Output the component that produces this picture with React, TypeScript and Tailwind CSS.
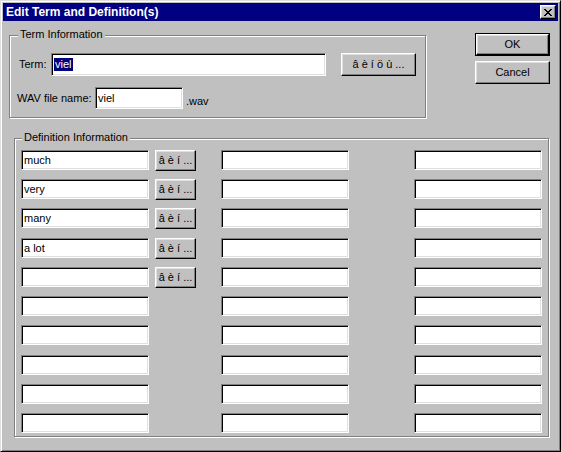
import React from 'react';

// Win95-style bevels
const sunken =
  'border border-t-[#808080] border-l-[#808080] border-b-white border-r-white shadow-[inset_1px_1px_0_#000,inset_-1px_-1px_0_#dfdfdf] bg-white';
const raised =
  'border border-t-white border-l-white border-b-black border-r-black shadow-[inset_-1px_-1px_0_#808080,inset_1px_1px_0_#dfdfdf] bg-[#c0c0c0]';
const etched = 'relative border border-[#808080] shadow-[1px_1px_0_#fff,inset_1px_1px_0_#fff]';

const definitions = ['much', 'very', 'many', 'a lot', '', '', '', '', '', ''];

const Field: React.FC<{ value?: string; className?: string }> = ({ value, className }) => (
  <div className={`${sunken} flex items-center pl-[2px] ${className ?? ''}`}>
    <span className="leading-none">{value}</span>
  </div>
);

const Button: React.FC<{ label: string; className?: string }> = ({ label, className }) => (
  <button
    type="button"
    className={`${raised} flex items-center justify-center whitespace-nowrap leading-none ${className ?? ''}`}
  >
    {label}
  </button>
);

const App: React.FC = () => {
  return (
    <div
      className="w-[561px] h-[452px] bg-[#c0c0c0] text-black text-[11px] border border-t-[#dfdfdf] border-l-[#dfdfdf] border-b-black border-r-black shadow-[inset_1px_1px_0_#fff,inset_-1px_-1px_0_#808080] p-[2px] flex flex-col overflow-hidden"
      style={{ fontFamily: '"Liberation Sans", Arial, sans-serif' }}
    >
      {/* Title bar */}
      <div className="h-[18px] bg-[#000080] flex items-center justify-between pl-[3px] pr-[2px] shrink-0">
        <span className="text-white font-bold text-[12px] leading-none">Edit Term and Definition(s)</span>
        <button
          type="button"
          className={`${raised} w-[16px] h-[14px] flex items-center justify-center`}
        >
          <svg width="8" height="7" viewBox="0 0 8 7" shapeRendering="crispEdges">
            <path d="M0 0h2v1h-2zM6 0h2v1h-2zM1 1h2v1h-2zM5 1h2v1h-2zM2 2h4v1h-4zM3 3h2v1h-2zM2 4h4v1h-4zM1 5h2v1h-2zM5 5h2v1h-2zM0 6h2v1h-2zM6 6h2v1h-2z" fill="#000" />
          </svg>
        </button>
      </div>

      {/* Top section */}
      <div className="flex">
        <div className={`${etched} ml-[6px] mt-[14px] w-[417px] h-[83px]`}>
          <span className="absolute -top-[7px] left-[8px] px-[2px] bg-[#c0c0c0] leading-none">Term Information</span>
          <div className="flex items-center mt-[17px] ml-[9px]">
            <span className="w-[32px]">Term:</span>
            <div className={`${sunken} w-[275px] h-[23px] flex items-center pl-[2px]`}>
              <span className="bg-[#000080] text-white leading-[13px] px-[1px]">viel</span>
            </div>
            <Button label="â è í ö ù ..." className="ml-[15px] w-[75px] h-[23px]" />
          </div>
          <div className="flex items-center mt-[11px] ml-[7px]">
            <span className="w-[78px]">WAV file name:</span>
            <Field value="viel" className="w-[88px] h-[22px]" />
            <span className="ml-[3px] self-end">.wav</span>
          </div>
        </div>

        <div className="flex flex-col ml-[49px] mt-[12px] gap-[5px]">
          <div className="border border-black">
            <Button label="OK" className="w-[73px] h-[21px]" />
          </div>
          <Button label="Cancel" className="w-[75px] h-[23px]" />
        </div>
      </div>

      {/* Definition section */}
      <div className={`${etched} ml-[11px] mt-[20px] w-[535px] h-[299px]`}>
        <span className="absolute -top-[7px] left-[7px] px-[2px] bg-[#c0c0c0] leading-none">Definition Information</span>
        <div className="flex flex-col gap-[9px] mt-[11px] ml-[6px]">
          {definitions.map((d, i) => (
            <div key={i} className={`flex items-start h-[20px] ${i === 3 || i === 7 ? 'mt-[1px]' : ''}`}>
              <Field value={d} className="w-[128px] h-[20px]" />
              <div className="w-[47px] pl-[6px]">
                {i < 5 && <Button label="â è í ..." className="w-[41px] h-[21px]" />}
              </div>
              <Field className="ml-[25px] w-[128px] h-[20px]" />
              <Field className="ml-[65px] w-[128px] h-[20px]" />
            </div>
          ))}
        </div>
      </div>
    </div>
  );
};

export default App;
